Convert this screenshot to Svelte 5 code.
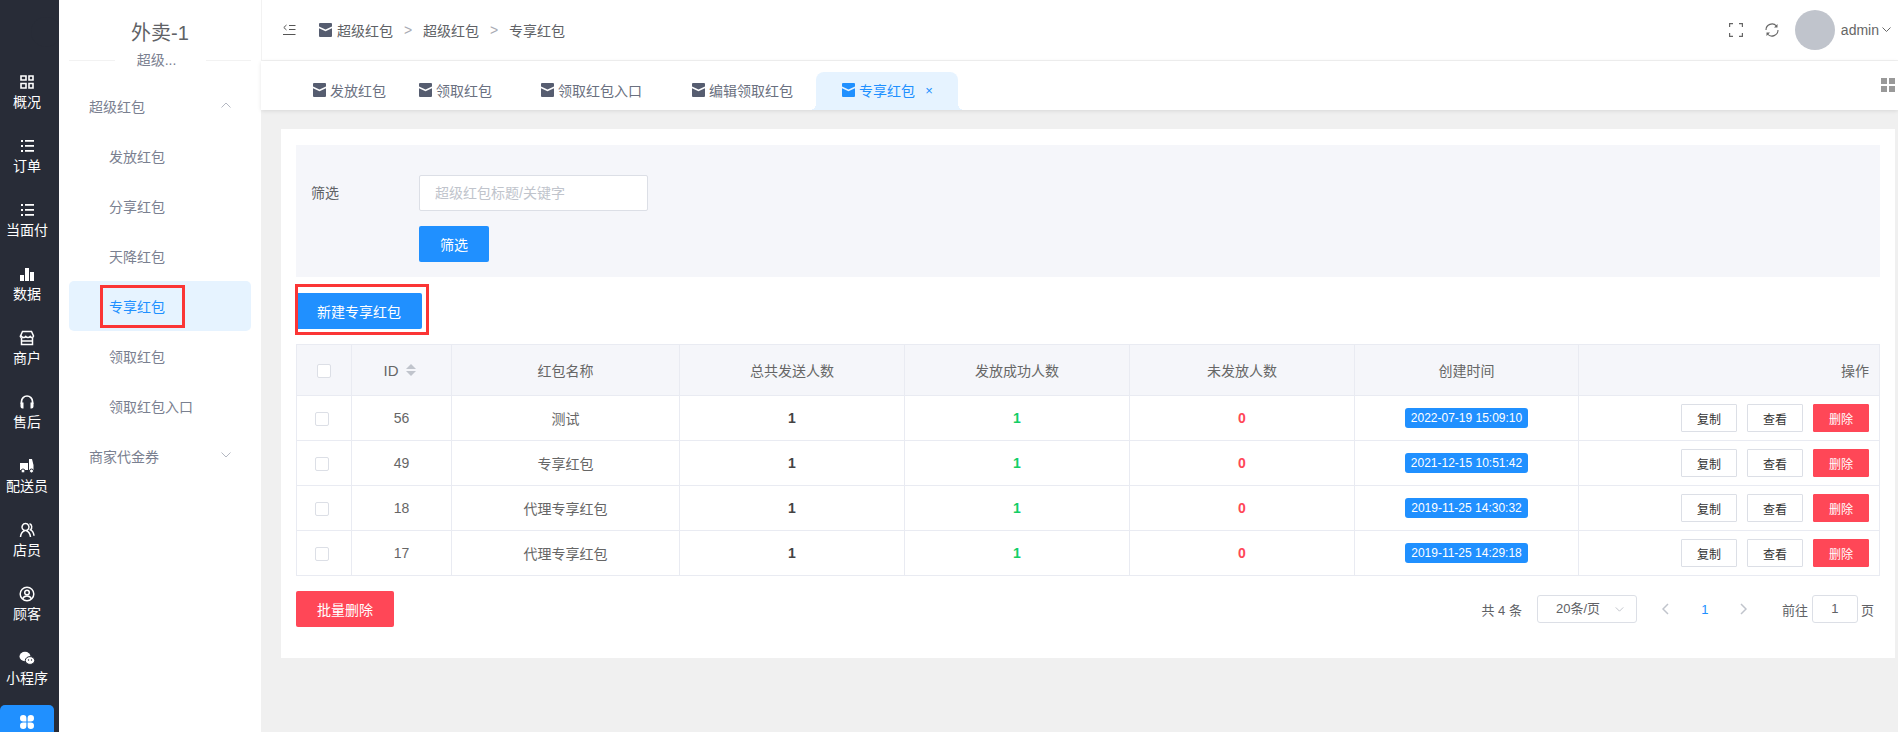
<script>
  const nav = [
    { label: '概况', icon: 'grid' }, { label: '订单', icon: 'list' }, { label: '当面付', icon: 'list' },
    { label: '数据', icon: 'bars' }, { label: '商户', icon: 'shop' }, { label: '售后', icon: 'headset' },
    { label: '配送员', icon: 'truck' }, { label: '店员', icon: 'staff' }, { label: '顾客', icon: 'user' },
    { label: '小程序', icon: 'wechat' }, { label: '', icon: 'clover', active: true }
  ];
  const subs = ['发放红包', '分享红包', '天降红包', '专享红包', '领取红包', '领取红包入口'];
  const tabs = [
    { t: '发放红包', w: 106 }, { t: '领取红包', w: 122 }, { t: '领取红包入口', w: 151 }, { t: '编辑领取红包', w: 118 }
  ];
  const rows = [
    { id: 56, name: '测试', time: '2022-07-19 15:09:10' },
    { id: 49, name: '专享红包', time: '2021-12-15 10:51:42' },
    { id: 18, name: '代理专享红包', time: '2019-11-25 14:30:32' },
    { id: 17, name: '代理专享红包', time: '2019-11-25 14:29:18' }
  ];
</script>

{#snippet packet()}
  <svg class="packet" viewBox="0 0 13 14" aria-hidden="true">
    <path fill="currentColor" d="M1 0h11a1 1 0 0 1 1 1v2.6L6.5 6.6 0 3.6V1a1 1 0 0 1 1-1zM0 5.2l6.5 3 6.5-3V13a1 1 0 0 1-1 1H1a1 1 0 0 1-1-1z"/>
  </svg>
{/snippet}

{#snippet navIcon(name)}
  <svg class="nav-icon" viewBox="0 0 16 16" aria-hidden="true">
    {#if name === 'grid'}
      <path fill="none" stroke="#fff" stroke-width="1.6" d="M2 2h5v4H2zM10 2h4v4h-4zM2 9.500h5V14H2zM10 9.500h4V14h-4z"/>
    {:else if name === 'list'}
      <path fill="#fff" d="M2 2h2v2H2zM6 2h9v1.800H6zM2 7h2v2H2zM6 7h9v1.800H6zM2 12h2v2H2zM6 12h9v1.800H6z"/>
    {:else if name === 'bars'}
      <path fill="#fff" d="M1 9h4v6H1zM6 2h4v13H6zM11 6h4v9h-4z"/>
    {:else if name === 'shop'}
      <path fill="none" stroke="#fff" stroke-width="1.500" d="M3.500 1.500h9l2 4.500c0 1.500-2.300 2-3.300.5-.8 1.200-3.600 1.200-4.400 0-.8 1.200-3.400 1.200-4.200 0C1.700 7.800 1 6.800 1.500 6zM2.500 8v6.500h11V8M2 11h12"/>
    {:else if name === 'headset'}
      <path fill="none" stroke="#fff" stroke-width="1.700" d="M2.500 10V7.500a5.500 5.500 0 0 1 11 0V10"/>
      <path fill="#fff" d="M1.500 8.500h3v6h-1a2 2 0 0 1-2-2zM11.500 8.500h3v4a2 2 0 0 1-2 2h-1z"/>
    {:else if name === 'truck'}
      <path fill="#fff" d="M1 5h8v7H1zM10 1h3l1.500 6v5H10z"/>
      <circle cx="4" cy="13" r="2" fill="#fff" stroke="#282c37"/><circle cx="12.500" cy="13" r="2" fill="#fff" stroke="#282c37"/>
    {:else if name === 'staff'}
      <path fill="none" stroke="#fff" stroke-width="1.500" d="M6.500 1.500a3.500 3.500 0 1 1-.01 0zM1.500 15c.3-3.500 2-5.500 4-6M7.500 9c2 .5 3.500 2.500 4 6M10.500 1.800c2.500.5 3 4.500 1 6 2 1 3.300 3.500 3.500 6"/>
    {:else if name === 'user'}
      <circle cx="8" cy="8" r="6.800" fill="none" stroke="#fff" stroke-width="1.500"/>
      <circle cx="8" cy="6.500" r="2.300" fill="none" stroke="#fff" stroke-width="1.500"/>
      <path fill="none" stroke="#fff" stroke-width="1.500" d="M3.500 13c1-2.300 2.500-3 4.500-3s3.500.7 4.500 3"/>
    {:else if name === 'wechat'}
      <ellipse cx="6" cy="6.500" rx="5.500" ry="4.700" fill="#fff"/>
      <ellipse cx="11" cy="10.500" rx="4.700" ry="3.900" fill="#fff" stroke="#282c37"/>
      <circle cx="9.500" cy="10" r=".7" fill="#282c37"/><circle cx="12.500" cy="10" r=".7" fill="#282c37"/>
    {:else if name === 'clover'}
      <path fill="#fff" d="M4.200 1a3.200 3.200 0 0 1 3.200 3.200v3.200H4.200a3.200 3.200 0 0 1 0-6.400zM11.800 1a3.200 3.200 0 0 1 0 6.400H8.600V4.200A3.200 3.200 0 0 1 11.800 1zM4.200 8.600h3.200v3.200a3.200 3.200 0 1 1-3.200-3.200zM8.600 8.600h3.200a3.200 3.200 0 1 1-3.200 3.200z"/>
    {/if}
  </svg>
{/snippet}

<div class="app">
  <aside class="rail">
    <div class="logo-bump"></div>
    <div class="rail-items">
      {#each nav as n}
        <div class="rail-item" class:active={n.active}>
          {@render navIcon(n.icon)}
          {#if n.label}<span>{n.label}</span>{/if}
        </div>
      {/each}
    </div>
  </aside>

  <aside class="side">
    <div class="store">外卖-1</div>
    <div class="side-rule"><span>超级...</span></div>
    <div class="menu">
      <div class="group">
        <span>超级红包</span>
        <svg class="chev" viewBox="0 0 10 6"><path d="M.5 5.500 5 1l4.500 4.500" /></svg>
      </div>
      {#each subs as s, i}
        <div class="sub" class:on={i === 3}>
          <span class="sub-text">{s}</span>
          {#if i === 3}<span class="mark-sub"></span>{/if}
        </div>
      {/each}
      <div class="group">
        <span>商家代金券</span>
        <svg class="chev" viewBox="0 0 10 6"><path d="M.5 .5 5 5l4.500-4.500" /></svg>
      </div>
    </div>
  </aside>

  <main class="main">
    <header class="top">
      <svg class="fold" viewBox="0 0 13 12" aria-hidden="true">
        <path fill="none" stroke="#555" stroke-width="1" d="M3.500 1 .8 3.500l2.700 2.500M6 1.500h6.500M6 5.500h6.500M0 10.500h12.500"/>
      </svg>
      <nav class="crumbs">
        {@render packet()}
        <span class="c1">超级红包</span><span class="sep">&gt;</span>
        <span>超级红包</span><span class="sep">&gt;</span>
        <span>专享红包</span>
      </nav>
      <div class="top-right">
        <svg class="tool" viewBox="0 0 14 14" aria-hidden="true">
          <path fill="none" stroke="#666" stroke-width="1.200" d="M.6 4V.6H4M10 .6h3.400V4M.6 10v3.400H4M10 13.400h3.400V10"/>
        </svg>
        <svg class="tool refresh" viewBox="0 0 14 14" aria-hidden="true">
          <path fill="none" stroke="#666" stroke-width="1.100" d="M1 7a6 6 0 0 1 10.500-4M13 7a6 6 0 0 1-10.500 4"/>
          <path fill="#666" d="M12.500 1v3.500H9zM1.500 13V9.500H5z"/>
        </svg>
        <div class="avatar"></div>
        <span class="admin">admin</span>
        <svg class="admin-chev" viewBox="0 0 9 5"><path d="M.5 .5 4.500 4.500 8.500 .5"/></svg>
      </div>
    </header>

    <div class="tabs">
      {#each tabs as t}
        <div class="tab" style="width:{t.w}px">{@render packet()}<span>{t.t}</span></div>
      {/each}
      <div class="tab-on">
        <span class="flare left"></span>
        {@render packet()}<span>专享红包</span><span class="x">×</span>
        <span class="flare right"></span>
      </div>
      <div class="tabs-grid"><i></i><i></i><i></i><i></i></div>
    </div>

    <div class="content">
      <section class="card">
        <div class="filter">
          <div class="filter-row">
            <label class="filter-label" for="kw">筛选</label>
            <input id="kw" class="input" placeholder="超级红包标题/关键字" />
          </div>
          <button class="btn blue filter-btn">筛选</button>
        </div>

        <div class="new-wrap">
          <button class="btn blue new-btn">新建专享红包</button>
          <span class="mark-new"></span>
        </div>

        <table>
          <colgroup>
            <col style="width:55px"/><col style="width:100px"/><col style="width:228px"/><col style="width:225px"/>
            <col style="width:225px"/><col style="width:225px"/><col style="width:224px"/><col/>
          </colgroup>
          <thead>
            <tr>
              <th><span class="check head-check"></span></th>
              <th><span class="id-head">ID<span class="sort"><i class="up"></i><i class="down"></i></span></span></th>
              <th>红包名称</th><th>总共发送人数</th><th>发放成功人数</th><th>未发放人数</th><th>创建时间</th>
              <th class="right">操作</th>
            </tr>
          </thead>
          <tbody>
            {#each rows as r}
              <tr>
                <td><span class="check row-check"></span></td>
                <td>{r.id}</td>
                <td>{r.name}</td>
                <td class="num dark">1</td>
                <td class="num green">1</td>
                <td class="num red">0</td>
                <td><span class="tag">{r.time}</span></td>
                <td class="right ops">
                  <button class="op">复制</button><button class="op">查看</button><button class="op del">删除</button>
                </td>
              </tr>
            {/each}
          </tbody>
        </table>

        <div class="foot">
          <button class="btn batch">批量删除</button>
          <div class="pager">
            <span class="total">共 4 条</span>
            <div class="size"><span>20条/页</span>
              <svg viewBox="0 0 10 6"><path d="M.5 .5 5 5l4.500-4.500"/></svg>
            </div>
            <svg class="arrow a-prev" viewBox="0 0 7 12"><path d="M6 1 1 6l5 5"/></svg>
            <span class="page">1</span>
            <svg class="arrow a-next" viewBox="0 0 7 12"><path d="M1 1l5 5-5 5"/></svg>
            <span class="goto">前往</span>
            <div class="page-input">1</div>
            <span class="ye">页</span>
          </div>
        </div>
      </section>
    </div>
  </main>
</div>

<style>
  :global(body) { margin: 0; }
  .app {
    display: flex; width: 1898px; height: 732px; overflow: hidden; background: #f0f0f0;
    font-family: "Liberation Sans", "Noto Sans CJK SC", sans-serif; font-size: 14px; color: #666;
  }
  .rail { position: relative; width: 59px; flex: none; background: #282c37; }
  .logo-bump { position: absolute; left: 31px; top: 17px; width: 30px; height: 30px; border-radius: 50%; background: #282c37; }
  .rail-items { padding-top: 65px; }
  .rail-item {
    width: 54px; height: 64px; box-sizing: border-box; padding-top: 10px; display: flex; flex-direction: column;
    align-items: center; gap: 3px; color: #fff; white-space: nowrap; border-radius: 5px 5px 0 0;
  }
  .rail-item span { line-height: 20px; }
  .rail-item.active { background: #2090ff; padding-top: 10px; }
  .nav-icon { width: 16px; height: 16px; margin: -1px 0 -1px; flex: none; }

  .side { position: relative; z-index: 1; width: 202px; flex: none; background: #fff; }
  .store { height: 54px; padding-top: 21px; box-sizing: border-box; line-height: 25px; text-align: center; font-size: 20px; color: #606266; }
  .side-rule { height: 13px; margin: 0 10px; position: relative; }
  .side-rule::before { content: ""; position: absolute; left: 0; right: 0; top: 6px; border-top: 1px solid #f2f2f2; }
  .side-rule span {
    position: absolute; left: 46px; width: 91px; top: -4px; line-height: 20px; text-indent: -8px; text-align: center; background: #fff;
    font-size: 14px; color: #7a8090;
  }
  .menu { padding: 14px 10px 0; }
  .group { height: 50px; display: flex; align-items: center; justify-content: space-between; padding: 0 20px; color: #7a8090; }
  .chev { width: 10px; height: 6px; margin-top: -3px; margin-right: 0; }
  .chev path, .admin-chev path, .size path, .arrow path { fill: none; stroke: #b4b8c2; stroke-width: 1; }
  .sub { position: relative; height: 50px; display: flex; align-items: center; padding-left: 40px; color: #7a8090; border-radius: 5px; }
  .sub.on { background: #e6f3ff; color: #2090ff; }
  .mark-sub { position: absolute; left: 31px; top: 4px; width: 79px; height: 37px; border: 3px solid #fb3535; }

  .main { flex: 1; min-width: 0; display: flex; flex-direction: column; }
  .top {
    height: 61px; box-sizing: border-box; flex: none; display: flex; align-items: center; background: #fff;
    border-bottom: 1px solid #f2f2f2; border-left: 1px solid #f2f2f2; padding-left: 21px; padding-bottom: 1px;
  }
  .fold { width: 13px; height: 12px; flex: none; }
  .crumbs { display: flex; align-items: center; margin-left: 23px; color: #606266; }
  .packet { width: 13px; height: 14px; flex: none; color: #565d70; }
  .c1 { margin-left: 5px; }
  .sep { width: 30px; text-align: center; color: #a8abb3; }
  .top-right { margin-left: auto; display: flex; align-items: center; padding-right: 7px; }
  .tool { width: 14px; height: 14px; flex: none; margin-right: 22px; }
  .refresh { margin-right: 16px; }
  .avatar { width: 40px; height: 40px; border-radius: 50%; background: #c0c4cc; }
  .admin { margin-left: 6px; font-size: 14px; color: #666; }
  .admin-chev { width: 9px; height: 5px; margin-left: 3px; }
  .admin-chev path { stroke: #666; }

  .tabs {
    position: relative; height: 49px; flex: none; display: flex; align-items: flex-end; background: #fff;
    padding-left: 52px; box-shadow: 0 1px 4px rgba(0, 0, 0, .1); z-index: 1;
  }
  .tab { height: 38px; padding-bottom: 2px; display: flex; align-items: center; gap: 4px; color: #6a7080; box-sizing: border-box; }
  .tab-on {
    position: relative; width: 142px; height: 38px; margin-left: 6px; box-sizing: border-box; padding: 0 0 2px 26px; display: flex;
    align-items: center; gap: 4px; background: #e6f3ff; color: #2090ff; border-radius: 8px 8px 0 0;
  }
  .tab-on .packet { color: #2090ff; }
  .x { margin-left: 0; font-size: 13px; width: 10px; text-align: center; padding-left: 5px; }
  .flare { position: absolute; bottom: 0; width: 6px; height: 6px; background: radial-gradient(circle at var(--c), transparent 6px, #e6f3ff 6px); }
  .flare.left { left: -6px; --c: 0 0; }
  .flare.right { right: -6px; --c: 100% 0; }
  .tabs-grid {
    position: absolute; left: 1620px; top: 17px; display: grid; grid-template-columns: 6px 6px; gap: 2px;
  }
  .tabs-grid i { height: 6px; background: #999; }

  .content { padding: 19px 3px 0 20px; }
  .card { background: #fff; padding: 16px 15px 31px; height: 529px; box-sizing: border-box; }
  .filter { height: 132px; box-sizing: border-box; background: #f5f6fa; padding: 30px 0 0 15px; }
  .filter-row { display: flex; align-items: center; }
  .filter-label { width: 108px; padding-bottom: 2px; color: #606266; }
  .input {
    width: 229px; height: 36px; box-sizing: border-box; border: 1px solid #dcdfe6; border-radius: 2px; padding: 0 15px;
    font: inherit; background: #fff; outline: none;
  }
  .input::placeholder { color: #c0c4cc; opacity: 1; }
  .btn { height: 36px; border: 0; border-radius: 2px; color: #fff; font: inherit; padding: 0; display: block; }
  .blue { background: #2090ff; }
  .filter-btn { width: 70px; margin: 15px 0 0 108px; }
  .new-wrap { position: relative; width: 126px; margin: 16px 0 15px; }
  .new-btn { width: 126px; }
  .mark-new { position: absolute; left: -1px; top: -9px; width: 128px; height: 45px; border: 3px solid #fb3535; }

  table { width: 1584px; table-layout: fixed; border-collapse: collapse; border: 1px solid #e9ebf2; }
  th, td { border: 1px solid #e9ebf2; padding: 0; text-align: center; }
  th { height: 50px; background: #f5f6fa; font-weight: 400; color: #666; }
  td { height: 44px; color: #666; }
  th.right, td.right { text-align: right; padding-right: 10px; }
  .check { display: inline-block; box-sizing: border-box; width: 14px; height: 14px; background: #fff; border: 1px solid #dcdfe6; border-radius: 2px; vertical-align: middle; }
  .row-check { position: relative; left: -2px; }
  .id-head { display: inline-flex; align-items: center; gap: 7px; font-size: 15px; margin-right: 4px; }
  .sort { display: inline-flex; flex-direction: column; gap: 2px; }
  .sort i { display: block; width: 0; height: 0; border-left: 5px solid transparent; border-right: 5px solid transparent; }
  .sort .up { border-bottom: 5px solid #c0c4cc; }
  .sort .down { border-top: 5px solid #c0c4cc; }
  .num { font-weight: 700; }
  .dark { color: #444; }
  .green { color: #13ce66; }
  .red { color: #ff4757; }
  .tag {
    display: inline-block; padding: 0 6px; height: 20px; line-height: 20px; border-radius: 3px; background: #2090ff;
    color: #fff; font-size: 12px; vertical-align: middle;
  }
  .ops { white-space: nowrap; font-size: 0; }
  .op {
    width: 56px; height: 28px; padding: 0; box-sizing: border-box; border: 1px solid #dcdfe6; background: #fff; border-radius: 1px;
    font: 12px "Liberation Sans", "Noto Sans CJK SC", sans-serif; color: #333; margin-left: 10px; vertical-align: middle;
  }
  .op.del { background: #ff4757; border-color: #ff4757; color: #fff; }

  .foot { display: flex; justify-content: space-between; margin-top: 15px; }
  .batch { width: 98px; background: #ff4757; }
  .pager { display: flex; align-items: center; height: 36px; font-size: 13px; color: #606266; padding-right: 6px; }
  .size {
    position: relative; width: 100px; height: 28px; box-sizing: border-box; margin-left: 15px; padding-left: 18px; line-height: 26px;
    border: 1px solid #dcdfe6; border-radius: 3px; background: #fff;
  }
  .size svg { position: absolute; right: 12px; top: 11px; width: 9px; height: 5px; }
  .arrow { width: 7px; height: 12px; flex: none; }
  .arrow path { stroke: #c0c4cc; stroke-width: 1.500; }
  .a-prev { margin-left: 25px; }
  .page { width: 8px; text-align: center; margin-left: 32px; color: #2090ff; }
  .a-next { margin-left: 31px; }
  .goto { margin-left: 35px; }
  .page-input {
    width: 46px; height: 28px; box-sizing: border-box; margin: 0 3px 0 4px; border: 1px solid #dcdfe6; border-radius: 3px; line-height: 26px;
    text-align: center; background: #fff;
  }
</style>
